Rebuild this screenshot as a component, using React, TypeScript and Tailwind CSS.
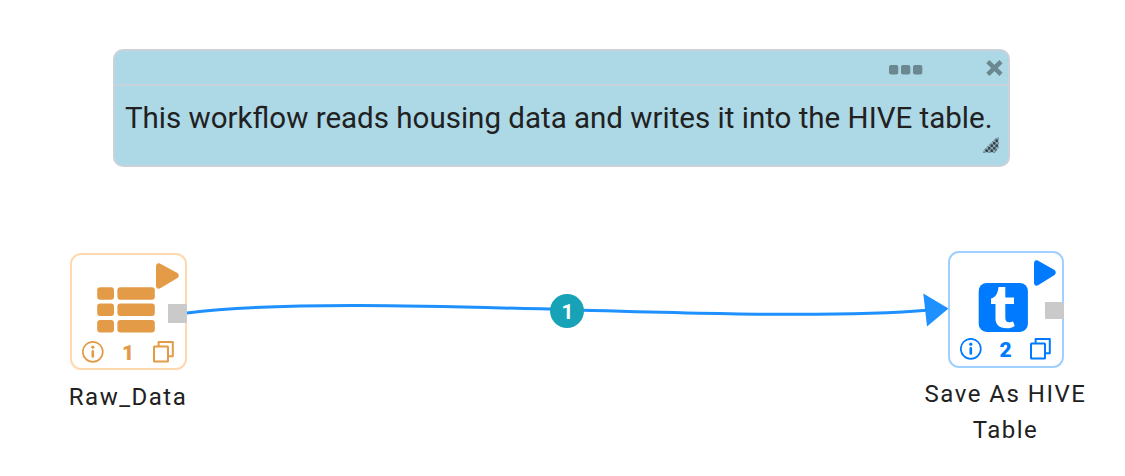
import React from "react";

function PlayIcon({ className }: { className: string }) {
  return (
    <svg className={className} viewBox="0 0 23 26" preserveAspectRatio="none" fill="currentColor">
      <path d="M0 3.5C0 .8 2-.5 4.300.7L21 9.800C23.300 11.300 23.300 13.900 21 15.300L4.300 25.300C2 26.500 0 25.200 0 22.500Z" />
    </svg>
  );
}

function InfoIcon() {
  return (
    <svg className="size-[22px]" viewBox="0 0 22 22" fill="none" stroke="currentColor">
      <circle cx="10.800" cy="10.800" r="10" strokeWidth="1.700" />
      <circle cx="10.800" cy="6.200" r="1.600" fill="currentColor" stroke="none" />
      <path d="M10.800 10.400V15.400" strokeWidth="2.600" strokeLinecap="round" />
    </svg>
  );
}

function CopyIcon() {
  return (
    <svg className="h-[22px] w-[21px]" viewBox="0 0 21 22" fill="none" stroke="currentColor" strokeWidth="2" strokeLinejoin="round">
      <rect x="1" y="5.500" width="14" height="15" rx=".6" />
      <path d="M5.600 5.500V1H19.800V15.200H15" />
    </svg>
  );
}

function TableIcon() {
  return (
    <svg className="h-[46px] w-[58px]" viewBox="0 0 58 46" fill="currentColor">
      {[0.2, 16.4, 33].map((y) => (
        <g key={y}>
          <rect x=".2" y={y} width="16.800" height="12.600" rx="3" />
          <rect x="20.400" y={y} width="37.400" height="12.600" rx="3" />
        </g>
      ))}
    </svg>
  );
}

function HiveIcon() {
  return (
    <svg className="size-[50px]" viewBox="0 0 50 50">
      <rect x=".7" y=".9" width="49.200" height="49" rx="8" fill="#007bff" />
      <path
        fill="#fff"
        d="M20.500 4.900H27.300V15.500H36V22H27.300V35.500C27.300 38.900 28.700 40.300 31 40.300C32.600 40.300 34 39.800 35 39.200L36.700 44C34.600 45.500 32 46.300 28.600 46.300C21 46.300 17.500 42.600 17.500 36.600V22H13V16.500C17.300 15.200 19.800 11.900 20.500 4.900Z"
      />
    </svg>
  );
}

function NodeFooter({ id }: { id: number }) {
  return (
    <div className="flex h-[22px] items-center justify-between pr-[11px] pl-[10px]">
      <InfoIcon />
      <span className="pt-[2px] pr-[1px] text-[21px] leading-[22px] font-black">{id}</span>
      <CopyIcon />
    </div>
  );
}

export default function App() {
  return (
    <main className="relative h-[476px] w-[1125px] overflow-hidden bg-white font-['Roboto',sans-serif] text-[#212121]">
      <section className="absolute top-[49px] left-[113px] flex h-[118px] w-[897px] flex-col rounded-[10px] border-2 border-[#cbd1d9] bg-[#add8e6]">
        <header className="flex h-[35px] shrink-0 items-center justify-end gap-[63px] border-b-2 border-[#c8d2dc] pr-[5px] text-[#6b8790]">
          <svg className="mt-[5px] h-[10px] w-[34px]" viewBox="0 0 34 10" fill="currentColor">
            <rect x="0" y="0" width="9.300" height="9.500" rx="2" />
            <rect x="12" y="0" width="9.300" height="9.500" rx="2" />
            <rect x="24" y="0" width="9.300" height="9.500" rx="2" />
          </svg>
          <svg className="h-4 w-[17px]" viewBox="0 0 17 16" stroke="currentColor" strokeWidth="4.600" strokeLinecap="square">
            <path d="M3.500 3.300L13.300 12.700M13.300 3.300L3.500 12.700" />
          </svg>
        </header>
        <p className="pt-[14px] pl-[10px] text-[29.53px] leading-[36px] whitespace-nowrap">
          This workflow reads housing data and writes it into the HIVE table.
        </p>
        <svg className="absolute right-[9px] bottom-[12px] size-4" viewBox="0 0 16 16">
          <defs>
            <pattern id="grip" width="5" height="5" patternUnits="userSpaceOnUse">
              <rect width="5" height="5" fill="#8aa8b2" />
              <circle cx="1.250" cy="1.250" r="1.400" fill="#34444a" />
              <circle cx="3.750" cy="3.750" r="1.400" fill="#34444a" />
            </pattern>
          </defs>
          <path d="M13.500 0.500H15.500V10.500L12 15.500H0V14Z" fill="url(#grip)" />
        </svg>
      </section>

      <svg className="absolute inset-0 h-full w-full" viewBox="0 0 1125 476" fill="none">
        <path d="M187 313C359 291 740 326 930 310" stroke="#1e90ff" strokeWidth="3" />
        <path d="M923.300 293.500L948.500 308.500L927 326.500Z" fill="#1e90ff" />
      </svg>
      <div className="absolute top-[294px] left-[550px] flex size-[34px] items-center justify-center rounded-full bg-[#17a2b8] pt-[2px] pl-[1px] text-[21px] leading-none font-bold text-white">
        1
      </div>

      <article className="absolute top-[253px] left-[70px] flex h-[117px] w-[117px] flex-col rounded-[11px] border-2 border-[#ffd9ae] text-[#e39b47]">
        <div className="flex h-[86px] items-start pt-[32px] pl-[25px]">
          <TableIcon />
        </div>
        <NodeFooter id={1} />
        <PlayIcon className="absolute top-[8px] left-[84px] h-[26px] w-[23px]" />
        <div className="absolute top-[49px] -right-[2px] h-[19px] w-[19px] bg-[#cacaca]" />
      </article>
      <p className="absolute top-[379px] left-[28px] w-[200px] text-center text-[24px] leading-[36px] tracking-[1.5px]">Raw_Data</p>

      <article className="absolute top-[251px] left-[948px] flex h-[117px] w-[116px] flex-col rounded-[11px] border-2 border-[#a1cfff] text-[#007bff]">
        <div className="flex h-[85px] items-start pt-[29px] pl-[28px]">
          <HiveIcon />
        </div>
        <NodeFooter id={2} />
        <PlayIcon className="absolute top-[7px] left-[84px] h-[26px] w-[22px]" />
        <div className="absolute top-[49px] -right-[2px] h-[17px] w-[19px] bg-[#cacaca]" />
      </article>
      <p className="absolute top-[376px] left-[914px] w-[183px] text-center text-[24px] leading-[36px] tracking-[1.5px]">Save As HIVE Table</p>
    </main>
  );
}
